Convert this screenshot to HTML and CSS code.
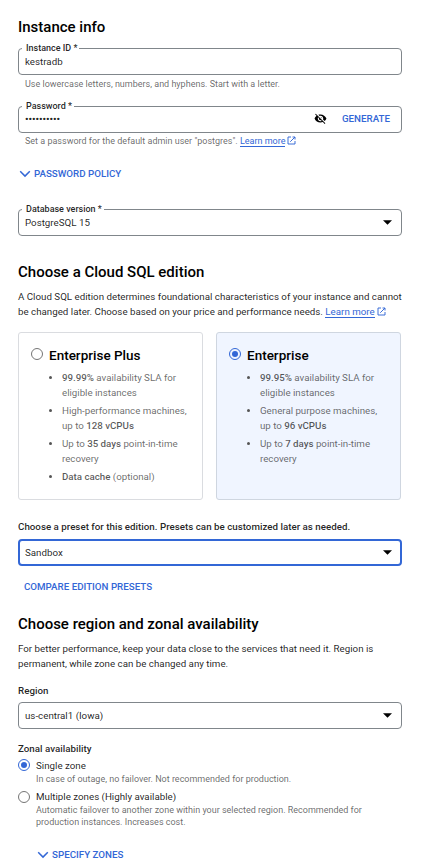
FILE: index.html
```html
<!DOCTYPE html>
<html lang="en">
<head>
<meta charset="utf-8">
<title>Create an instance</title>
<link rel="stylesheet" href="styles.css">
</head>
<body>
<svg class="defs" aria-hidden="true">
  <symbol id="chevron" viewBox="0 0 12 8"><path d="M1.2 1.3 6 6.1l4.8-4.8" fill="none" stroke="currentColor" stroke-width="1.5"/></symbol>
  <symbol id="external" viewBox="0 0 18 18"><path d="M8 2H2v14h14v-6M11 2h5v5M16 2 6.5 11.5" fill="none" stroke="currentColor" stroke-width="1.9"/></symbol>
  <symbol id="caret" viewBox="0 0 10 5"><path d="M0 0h10L5 5z" fill="currentColor"/></symbol>
</svg>
<main class="form">
  <section>
    <h2>Instance info</h2>
    <div class="field">
      <span class="label">Instance ID *</span>
      <span class="value">kestradb</span>
    </div>
    <p class="hint">Use lowercase letters, numbers, and hyphens. Start with a letter.</p>
    <div class="field password">
      <span class="label">Password *</span>
      <span class="value dots">••••••••••</span>
      <svg class="eye" viewBox="0 0 24 24"><path d="M12 7c2.76 0 5 2.24 5 5 0 .65-.13 1.26-.36 1.83l2.92 2.92c1.51-1.26 2.7-2.89 3.43-4.75-1.73-4.39-6-7.5-11-7.5-1.4 0-2.74.25-3.98.7l2.16 2.16C10.74 7.13 11.35 7 12 7zM2 4.27l2.28 2.28.46.46C3.08 8.3 1.78 10.02 1 12c1.73 4.39 6 7.5 11 7.5 1.55 0 3.03-.3 4.38-.84l.42.42L19.73 22 21 20.73 3.27 3 2 4.27zM7.53 9.8l1.55 1.55c-.05.21-.08.43-.08.65 0 1.66 1.34 3 3 3 .22 0 .44-.03.65-.08l1.55 1.55c-.67.33-1.41.53-2.2.53-2.76 0-5-2.24-5-5 0-.79.2-1.53.53-2.2zm4.31-.78 3.15 3.15.02-.16c0-1.66-1.34-3-3-3l-.17.01z"/></svg>
      <span class="action">GENERATE</span>
    </div>
    <p class="hint tight">Set a password for the default admin user "postgres". <a>Learn more</a><svg class="ext"><use href="#external"/></svg></p>
    <div class="expander policy"><svg class="chev"><use href="#chevron"/></svg>PASSWORD POLICY</div>
    <div class="field version">
      <span class="label">Database version *</span>
      <span class="value">PostgreSQL 15</span>
      <svg class="caret"><use href="#caret"/></svg>
    </div>
  </section>

  <section class="edition">
    <h2>Choose a Cloud SQL edition</h2>
    <p class="text">A Cloud SQL edition determines foundational characteristics of your instance and cannot<br>be changed later. Choose based on your price and performance needs. <a>Learn more</a><svg class="ext"><use href="#external"/></svg></p>
    <div class="cards">
      <article class="card">
        <header><span class="radio"></span><h3>Enterprise Plus</h3></header>
        <ul>
          <li><b>99.99%</b> availability SLA for<br>eligible instances</li>
          <li>High-performance machines,<br>up to <b>128 vCPUs</b></li>
          <li>Up to <b>35 days</b> point-in-time<br>recovery</li>
          <li><b>Data cache</b> (optional)</li>
        </ul>
      </article>
      <article class="card selected">
        <header><span class="radio on"></span><h3>Enterprise</h3></header>
        <ul>
          <li><b>99.95%</b> availability SLA for<br>eligible instances</li>
          <li>General purpose machines,<br>up to <b>96 vCPUs</b></li>
          <li>Up to <b>7 days</b> point-in-time<br>recovery</li>
        </ul>
      </article>
    </div>
    <h4 class="preset">Choose a preset for this edition. Presets can be customized later as needed.</h4>
    <div class="field focus">
      <span class="value">Sandbox</span>
      <svg class="caret"><use href="#caret"/></svg>
    </div>
    <div class="compare">COMPARE EDITION PRESETS</div>
  </section>

  <section class="region">
    <h2>Choose region and zonal availability</h2>
    <p class="text">For better performance, keep your data close to the services that need it. Region is<br>permanent, while zone can be changed any time.</p>
    <h4 class="region-label">Region</h4>
    <div class="field">
      <span class="value">us-central1 (Iowa)</span>
      <svg class="caret"><use href="#caret"/></svg>
    </div>
    <h4 class="zonal">Zonal availability</h4>
    <div class="option">
      <span class="radio on"></span>
      <div><div class="name">Single zone</div><p class="desc">In case of outage, no failover. Not recommended for production.</p></div>
    </div>
    <div class="option multi">
      <span class="radio"></span>
      <div><div class="name">Multiple zones (Highly available)</div><p class="desc">Automatic failover to another zone within your selected region. Recommended for<br>production instances. Increases cost.</p></div>
    </div>
    <div class="expander zones"><svg class="chev"><use href="#chevron"/></svg>SPECIFY ZONES</div>
  </section>
</main>
</body>
</html>
```
FILE: styles.css
```css
* { box-sizing: border-box; }
html { overflow: hidden; }
body { margin: 0; background: #fff; color: rgba(0,0,0,.87); font: 400 9.75px/15px Roboto, sans-serif; white-space: nowrap; }
h2, h3, h4, p, ul { margin: 0; padding: 0; }
b { font-weight: 500; }
.defs { position: absolute; width: 0; height: 0; }
.form { width: 384px; margin-left: 18px; padding-top: 17px; }
h2 { font-size: 15px; line-height: 20px; font-weight: 500; color: #000; }
h4 { font-size: 9.75px; line-height: 14px; font-weight: 500; letter-spacing: .01px; }
a { color: #3367d6; border-bottom: 1px solid #3367d6; }
.ext { width: 9px; height: 9px; margin-left: 2px; color: #3367d6; vertical-align: -1px; }

.field { position: relative; display: flex; align-items: center; height: 27px; padding: 0 9px 0 6px; border: 1px solid #80868b; border-radius: 4px; }
h2 + .field { margin-top: 11px; }
.label { position: absolute; left: 3px; top: -7px; padding: 0 2px 0 4px; background: #fff; font-size: 9px; line-height: 12px; font-weight: 500; }
.value { flex: 1; }
.focus { border: 2px solid #3367d6; padding: 0 8px 0 5px; }
.caret { width: 9px; height: 5px; color: #000; }
.eye { width: 13px; height: 13px; margin: -2px 15px 0 0; }
.action { color: #3367d6; font-weight: 500; margin: -2px 2px 0 0; }
.hint { margin: 3px 0 0 7px; font-size: 9px; line-height: 12px; color: rgba(0,0,0,.6); }
.hint.tight { margin-top: 2px; }
.password { margin-top: 16px; }
.dots { font-size: 9.75px; font-weight: 700; margin-top: -2px; }
.expander { display: flex; align-items: center; height: 14px; line-height: 14px; color: #3367d6; font-weight: 500; }
.chev { width: 12px; height: 8px; margin-right: 3px; }
.policy { margin: 20px 0 0 1px; }
.version { margin-top: 28px; }

.edition { margin-top: 26px; }
.text { margin-top: 7px; }
.cards { display: grid; grid-template-columns: 185px 185px; gap: 13px; margin-top: 13px; }
.card { height: 168px; padding: 15px 0 0 12px; border: 1px solid #dadce0; border-radius: 3px; color: rgba(0,0,0,.6); }
.card header { display: flex; gap: 6px; height: 16px; }
.card h3 { font-size: 13.5px; line-height: 14px; font-weight: 500; color: #000; }
.selected { background: #f0f5ff; border-color: #cfd6e0; }
.card ul { margin: 6px 0 0 31px; list-style: none; }
.card li { position: relative; margin-bottom: 3px; letter-spacing: -.02px; }
.card li::before { content: ""; position: absolute; left: -13px; top: 6px; width: 3px; height: 3px; border-radius: 50%; background: #555; }
.card b { color: rgba(0,0,0,.66); }
.radio { flex: none; display: flex; align-items: center; justify-content: center; width: 12px; height: 12px; border: 1px solid #757575; border-radius: 50%; }
.on { border-color: #3367d6; }
.on::after { content: ""; width: 6px; height: 6px; border-radius: 50%; background: #3367d6; }
.preset { margin: 20px 0 5px; }
.compare { margin: 14px 0 0 6px; line-height: 14px; font-weight: 500; color: #3367d6; }

.region { margin-top: 20px; }
.region-label { margin: 13px 0 4px; }
.zonal { margin: 13px 0 3px; }
.option { display: flex; gap: 6px; margin-bottom: 5px; }
.multi .radio { margin-top: 1px; }
.name { line-height: 14px; }
.desc { font-size: 9px; line-height: 12px; color: rgba(0,0,0,.6); }
.zones { margin: 20px 0 0 19px; }
```
